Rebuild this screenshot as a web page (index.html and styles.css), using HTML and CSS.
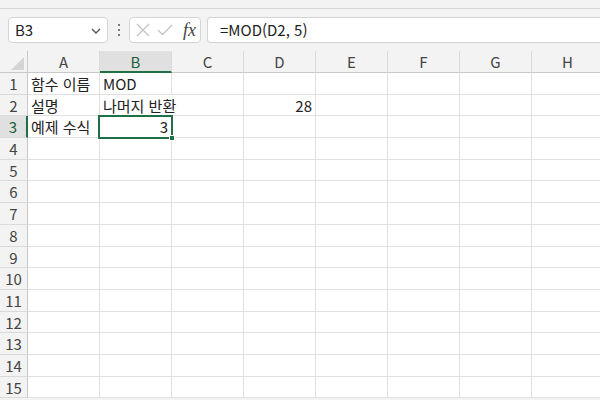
FILE: index.html
```html
<!DOCTYPE html>
<html lang="ko">
<head>
<meta charset="utf-8">
<link rel="stylesheet" href="styles.css">
</head>
<body>
<div class="topband"></div>
<div class="toolbar">
  <div class="namebox">
    <span class="nb-text">B3</span>
    <svg class="chev" width="10" height="6" viewBox="0 0 10 6"><path d="M1 1 L5 5 L9 1" fill="none" stroke="#555" stroke-width="1.4"/></svg>
  </div>
  <div class="dots"><i></i><i></i><i></i></div>
  <div class="fxgroup">
    <svg class="ico" width="14" height="14" viewBox="0 0 14 14"><path d="M1 1 L13 13 M13 1 L1 13" stroke="#c4c4c4" stroke-width="1.3" fill="none"/></svg>
    <svg class="ico" width="16" height="12" viewBox="0 0 16 12"><path d="M1 6 L5.5 10.5 L15 1" stroke="#c4c4c4" stroke-width="1.3" fill="none"/></svg>
    <span class="fx">fx</span>
  </div>
  <div class="formula">=MOD(D2, 5)</div>
</div>
<div class="sheet">
  <div class="corner"><svg width="13" height="13" viewBox="0 0 13 13"><path d="M13 0 L13 13 L0 13 Z" fill="#d4d4d4"/></svg></div>
  <div class="ch">A</div><div class="ch sel">B</div><div class="ch">C</div><div class="ch">D</div><div class="ch">E</div><div class="ch">F</div><div class="ch">G</div><div class="ch">H</div>

  <div class="rh">1</div><div class="c">함수 이름</div><div class="c">MOD</div><div class="c"></div><div class="c"></div><div class="c"></div><div class="c"></div><div class="c"></div><div class="c"></div>
  <div class="rh">2</div><div class="c">설명</div><div class="c span2">나머지 반환</div><div class="c num">28</div><div class="c"></div><div class="c"></div><div class="c"></div><div class="c"></div>
  <div class="rh sel">3</div><div class="c">예제 수식</div><div class="c num">3</div><div class="c"></div><div class="c"></div><div class="c"></div><div class="c"></div><div class="c"></div><div class="c"></div>
  <div class="rh">4</div><div class="c"></div><div class="c"></div><div class="c"></div><div class="c"></div><div class="c"></div><div class="c"></div><div class="c"></div><div class="c"></div>
  <div class="rh">5</div><div class="c"></div><div class="c"></div><div class="c"></div><div class="c"></div><div class="c"></div><div class="c"></div><div class="c"></div><div class="c"></div>
  <div class="rh">6</div><div class="c"></div><div class="c"></div><div class="c"></div><div class="c"></div><div class="c"></div><div class="c"></div><div class="c"></div><div class="c"></div>
  <div class="rh">7</div><div class="c"></div><div class="c"></div><div class="c"></div><div class="c"></div><div class="c"></div><div class="c"></div><div class="c"></div><div class="c"></div>
  <div class="rh">8</div><div class="c"></div><div class="c"></div><div class="c"></div><div class="c"></div><div class="c"></div><div class="c"></div><div class="c"></div><div class="c"></div>
  <div class="rh">9</div><div class="c"></div><div class="c"></div><div class="c"></div><div class="c"></div><div class="c"></div><div class="c"></div><div class="c"></div><div class="c"></div>
  <div class="rh">10</div><div class="c"></div><div class="c"></div><div class="c"></div><div class="c"></div><div class="c"></div><div class="c"></div><div class="c"></div><div class="c"></div>
  <div class="rh">11</div><div class="c"></div><div class="c"></div><div class="c"></div><div class="c"></div><div class="c"></div><div class="c"></div><div class="c"></div><div class="c"></div>
  <div class="rh">12</div><div class="c"></div><div class="c"></div><div class="c"></div><div class="c"></div><div class="c"></div><div class="c"></div><div class="c"></div><div class="c"></div>
  <div class="rh">13</div><div class="c"></div><div class="c"></div><div class="c"></div><div class="c"></div><div class="c"></div><div class="c"></div><div class="c"></div><div class="c"></div>
  <div class="rh">14</div><div class="c"></div><div class="c"></div><div class="c"></div><div class="c"></div><div class="c"></div><div class="c"></div><div class="c"></div><div class="c"></div>
  <div class="rh">15</div><div class="c"></div><div class="c"></div><div class="c"></div><div class="c"></div><div class="c"></div><div class="c"></div><div class="c"></div><div class="c"></div>

  <div class="selbox"><span class="handle"></span></div>
</div>
</body>
</html>
```

FILE: styles.css
```css
* { box-sizing: border-box; }
html, body { margin: 0; padding: 0; }
body {
  width: 600px;
  height: 400px;
  overflow: hidden;
  background: #f3f3f3;
  font-family: "Noto Sans CJK KR", "Noto Sans", sans-serif;
  color: #222;
}
.topband {
  height: 9px;
  background: #f3f3f3;
  border-bottom: 1px solid #d6d6d6;
}
.toolbar {
  display: flex;
  align-items: center;
  height: 42px;
  padding: 8px 0 8px 8px;
  background: #f3f3f3;
}
.namebox {
  width: 100px;
  height: 26px;
  background: #fff;
  border: 1px solid #d4d4d4;
  border-radius: 4px;
  display: flex;
  align-items: center;
  justify-content: space-between;
  padding: 0 6px 0 6px;
  font-size: 15px;
  color: #222;
}
.nb-text { line-height: 24px; }
.chev { margin-top: 1px; }
.dots {
  width: 21px;
  display: flex;
  flex-direction: column;
  align-items: center;
  gap: 3px;
}
.dots i {
  display: block;
  width: 2px;
  height: 2px;
  background: #555;
  border-radius: 1px;
}
.fxgroup {
  width: 72px;
  height: 26px;
  background: #fff;
  border: 1px solid #d4d4d4;
  border-radius: 4px;
  display: flex;
  align-items: center;
  padding: 0 0 0 6px;
  gap: 7px;
}
.fx {
  font-family: "Liberation Serif", "DejaVu Serif", serif;
  font-style: italic;
  font-size: 18px;
  color: #444;
  line-height: 24px;
  margin-left: 3px;
}
.formula {
  flex: 1;
  height: 26px;
  margin-left: 6px;
  background: #fff;
  border: 1px solid #d4d4d4;
  border-right: none;
  border-radius: 4px 0 0 4px;
  padding-left: 12px;
  font-size: 15px;
  line-height: 24px;
  color: #222;
}
.sheet {
  position: relative;
  display: grid;
  grid-template-columns: 28px repeat(8, 72px);
  grid-template-rows: 22px;
  grid-auto-rows: 21.7px;
  background: #fff;
  font-size: 15px;
}
.corner {
  background: #f3f3f3;
  border-right: 1px solid #c8c8c8;
  border-bottom: 1px solid #c8c8c8;
  display: flex;
  align-items: flex-end;
  justify-content: flex-end;
  padding: 0 3px 2px 0;
}
.corner svg { display: block; }
.ch {
  background: #f3f3f3;
  border-right: 1px solid #dadada;
  border-bottom: 1px solid #c8c8c8;
  text-align: center;
  line-height: 21px;
  color: #444;
}
.ch.sel {
  background: #e0e0e0;
  border-bottom: 2px solid #1f7145;
  color: #1c5f3a;
}
.rh {
  background: #f3f3f3;
  border-right: 1px solid #c8c8c8;
  border-bottom: 1px solid #dadada;
  text-align: center;
  line-height: 21px;
  color: #444;
}
.rh.sel {
  background: #e0e0e0;
  border-right: 2px solid #1f7145;
  color: #1c5f3a;
}
.c {
  border-right: 1px solid #e0e0e0;
  border-bottom: 1px solid #e0e0e0;
  padding: 0 3px;
  line-height: 21px;
  white-space: nowrap;
  color: #222;
}
.span2 { grid-column: span 2; }
.num { text-align: right; }
.selbox {
  position: absolute;
  left: 98px;
  top: 64px;
  width: 75px;
  height: 24px;
  border: 2px solid #1f7145;
}
.handle {
  position: absolute;
  right: -4px;
  bottom: -4px;
  width: 6px;
  height: 6px;
  background: #1f7145;
  border: 1px solid #fff;
}
```
